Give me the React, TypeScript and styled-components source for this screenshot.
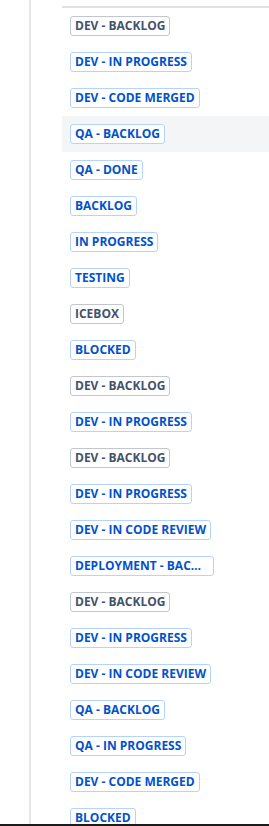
import styled, { createGlobalStyle } from 'styled-components';

type Tone = 'default' | 'inprogress';

const statuses: { label: string; tone: Tone }[] = [
  { label: 'DEV - BACKLOG', tone: 'default' },
  { label: 'DEV - IN PROGRESS', tone: 'inprogress' },
  { label: 'DEV - CODE MERGED', tone: 'inprogress' },
  { label: 'QA - BACKLOG', tone: 'inprogress' },
  { label: 'QA - DONE', tone: 'inprogress' },
  { label: 'BACKLOG', tone: 'inprogress' },
  { label: 'IN PROGRESS', tone: 'inprogress' },
  { label: 'TESTING', tone: 'inprogress' },
  { label: 'ICEBOX', tone: 'default' },
  { label: 'BLOCKED', tone: 'inprogress' },
  { label: 'DEV - BACKLOG', tone: 'default' },
  { label: 'DEV - IN PROGRESS', tone: 'inprogress' },
  { label: 'DEV - BACKLOG', tone: 'default' },
  { label: 'DEV - IN PROGRESS', tone: 'inprogress' },
  { label: 'DEV - IN CODE REVIEW', tone: 'inprogress' },
  { label: 'DEPLOYMENT - BACKLOG', tone: 'inprogress' },
  { label: 'DEV - BACKLOG', tone: 'default' },
  { label: 'DEV - IN PROGRESS', tone: 'inprogress' },
  { label: 'DEV - IN CODE REVIEW', tone: 'inprogress' },
  { label: 'QA - BACKLOG', tone: 'inprogress' },
  { label: 'QA - IN PROGRESS', tone: 'inprogress' },
  { label: 'DEV - CODE MERGED', tone: 'inprogress' },
  { label: 'BLOCKED', tone: 'inprogress' },
];

const HOVERED = 3;

export default function App() {
  return (
    <>
      <GlobalStyle />
      <Page>
        <Gutter />
        <Main>
          <StatusList>
            {statuses.map((s, i) => (
              <Row key={i} $active={i === HOVERED}>
                <Lozenge $tone={s.tone}>{s.label}</Lozenge>
              </Row>
            ))}
          </StatusList>
        </Main>
      </Page>
      <BottomEdge />
    </>
  );
}

const GlobalStyle = createGlobalStyle`
  html, body {
    margin: 0;
    padding: 0;
    background: #ffffff;
    overflow: hidden;
  }
  body {
    font-family: "Open Sans", "Noto Sans", sans-serif;
  }
`;

const Page = styled.div`
  display: flex;
  height: 826px;
  overflow: hidden;
`;

const Gutter = styled.div`
  width: 29px;
  flex-shrink: 0;
  border-right: 2px solid #e4e6ea;
`;

const Main = styled.div`
  flex: 1;
  margin-left: 31px;
  padding-top: 6px;
`;

const StatusList = styled.div`
  border-top: 2px solid #dfe1e6;
  display: flex;
  flex-direction: column;
`;

const Row = styled.div<{ $active?: boolean }>`
  height: 36px;
  box-sizing: border-box;
  padding: 8px 0 0 8px;
  background: ${(p) => (p.$active ? '#f4f5f7' : 'transparent')};
`;

const Lozenge = styled.span<{ $tone: Tone }>`
  display: inline-block;
  box-sizing: border-box;
  max-width: 144px;
  height: 20px;
  line-height: 18px;
  padding: 0 4px;
  border-radius: 3px;
  border: 1px solid ${(p) => (p.$tone === 'default' ? '#c1c7d0' : '#b3d4ff')};
  color: ${(p) => (p.$tone === 'default' ? '#42526e' : '#0052cc')};
  background: #ffffff;
  font-size: 12px;
  font-weight: 700;
  white-space: nowrap;
  overflow: hidden;
  text-overflow: ellipsis;
  vertical-align: top;
`;

const BottomEdge = styled.div`
  position: fixed;
  left: 0;
  right: 0;
  bottom: 0;
  height: 2px;
  background: #1b1b1b;
`;
